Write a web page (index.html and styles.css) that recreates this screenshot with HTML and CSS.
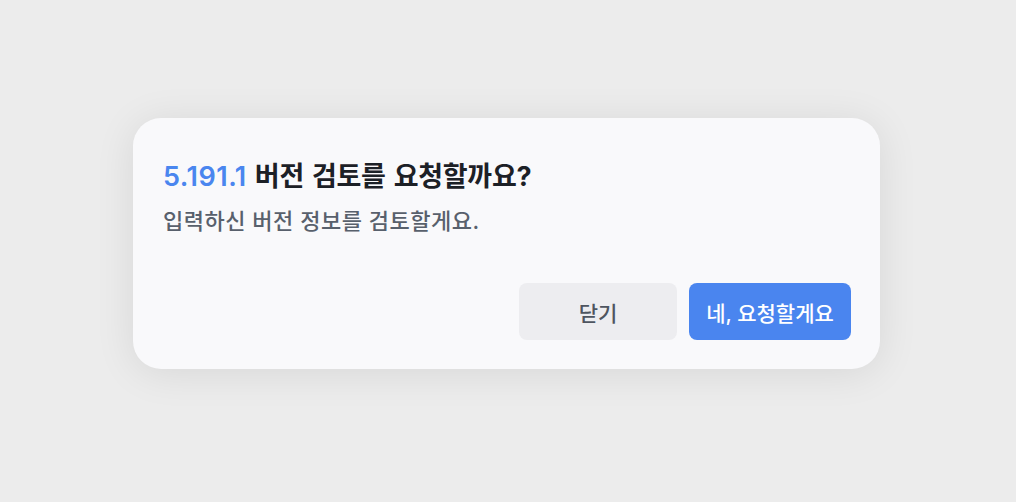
FILE: index.html
```html
<!DOCTYPE html>
<html lang="ko">
<head>
<meta charset="utf-8">
<link rel="stylesheet" href="styles.css">
</head>
<body>
<div class="stage">
  <div class="dialog">
    <h1 class="title"><span class="ver">5.191.1</span> 버전 검토를 요청할까요?</h1>
    <p class="desc">입력하신 버전 정보를 검토할게요.</p>
    <div class="actions">
      <button class="btn btn-secondary">닫기</button>
      <button class="btn btn-primary">네, 요청할게요</button>
    </div>
  </div>
</div>
</body>
</html>
```
FILE: styles.css
```css
* { box-sizing: border-box; }
html, body { margin: 0; padding: 0; }
body {
  background: #ececec;
  font-family: Inter, "Noto Sans CJK KR", sans-serif;
  width: 1016px;
  height: 502px;
  overflow: hidden;
}
.stage {
  padding: 118px 0 0 133px;
}
.dialog {
  width: 747px;
  height: 251px;
  background: #f9f9fb;
  border-radius: 28px;
  box-shadow: 0 4px 40px rgba(0, 0, 0, 0.09);
  padding: 41px 29px 29px 30px;
  display: flex;
  flex-direction: column;
}
.title {
  margin: 0;
  font-size: 27px;
  line-height: 36px;
  font-weight: 700;
  color: #1c2026;
  word-spacing: 2px;
  letter-spacing: -0.3px;
}
.ver {
  color: #4a86ef;
  font-weight: 600;
  letter-spacing: 0.5px;
}
.desc {
  margin: 11px 0 0;
  font-size: 22px;
  line-height: 30px;
  font-weight: 500;
  color: #58606c;
  letter-spacing: 0.5px;
}
.actions {
  margin-top: auto;
  display: flex;
  justify-content: flex-end;
  gap: 12px;
}
.btn {
  height: 57px;
  border: none;
  border-radius: 8px;
  font-family: Inter, "Noto Sans CJK KR", sans-serif;
  font-size: 21px;
  font-weight: 500;
}
.btn-secondary {
  width: 158px;
  background: #ededf0;
  color: #4e5560;
}
.btn-primary {
  width: 162px;
  background: #4a85ef;
  color: #ffffff;
}
```
